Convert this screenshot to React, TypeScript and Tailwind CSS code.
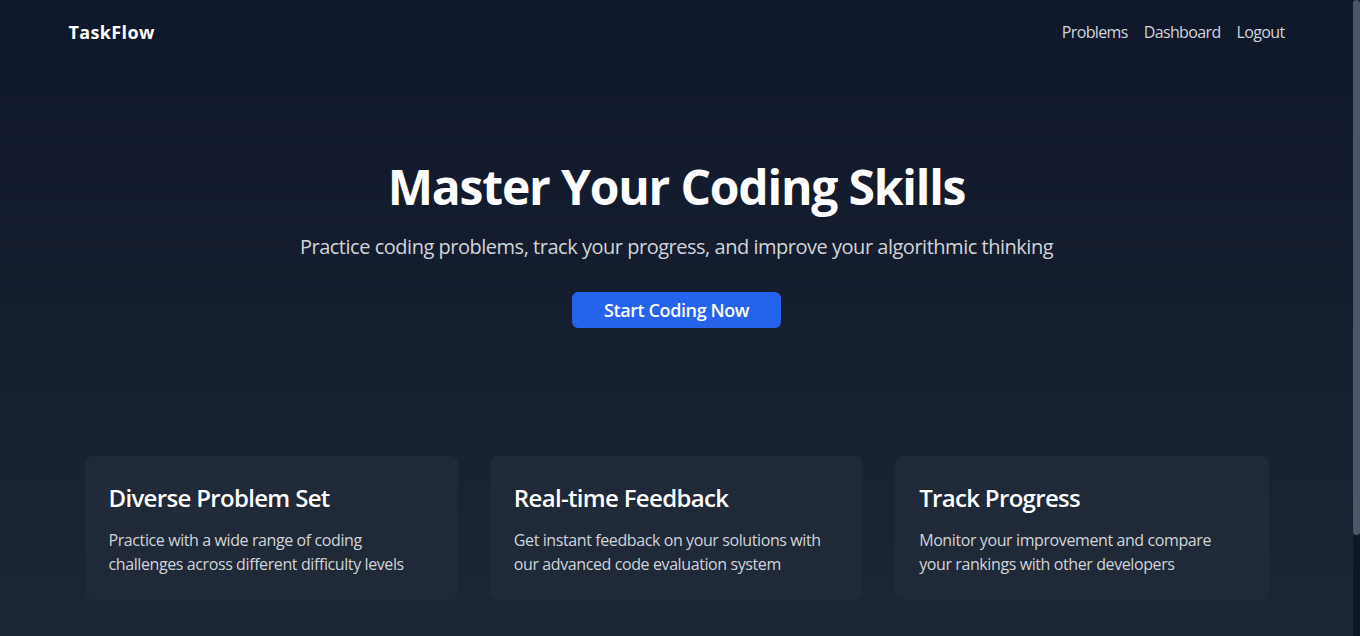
const FEATURES = [
  {
    title: "Diverse Problem Set",
    text: "Practice with a wide range of coding challenges across different difficulty levels",
  },
  {
    title: "Real-time Feedback",
    text: "Get instant feedback on your solutions with our advanced code evaluation system",
  },
  {
    title: "Track Progress",
    text: "Monitor your improvement and compare your rankings with other developers",
  },
];

export default function App() {
  return (
    <div className="flex h-[636px] overflow-hidden bg-[#0f172a] font-['Open_Sans',sans-serif] tracking-tight text-white">
      <main className="min-h-[756px] flex-1 bg-gradient-to-b from-[#0f172a] to-[#1f2937]">
        <nav className="mx-auto flex h-16 max-w-7xl items-center justify-between px-8">
          <span className="text-lg font-bold tracking-[0.02em]">TaskFlow</span>
          <div className="flex gap-4 text-base tracking-[-0.04em] text-[#d1d5db]">
            <a href="#">Problems</a>
            <a href="#">Dashboard</a>
            <a href="#">Logout</a>
          </div>
        </nav>

        <section className="mx-auto max-w-7xl px-8 pt-[99px] text-center">
          <h1 className="mb-[22px] text-5xl leading-[48px] font-bold tracking-[-0.025em]">
            Master Your Coding Skills
          </h1>
          <p className="mb-[31px] text-xl leading-7 tracking-[-0.024em] text-[#d1d5db]">
            Practice coding problems, track your progress, and improve your algorithmic thinking
          </p>
          <div className="flex justify-center">
            <button className="h-9 rounded-md bg-[#2563eb] px-8 text-lg font-semibold text-white">
              Start Coding Now
            </button>
          </div>
        </section>

        <section className="mx-auto mt-32 grid max-w-7xl grid-cols-3 gap-8 px-12">
          {FEATURES.map((f) => (
            <div key={f.title} className="rounded-lg bg-[#1f2937] p-6">
              <h3 className="mb-[14px] pt-0.5 text-2xl leading-8 font-semibold tracking-[-0.028em]">
                {f.title}
              </h3>
              <p className="text-base leading-6 text-[#d1d5db]">{f.text}</p>
            </div>
          ))}
        </section>
      </main>

      {/* scrollbar */}
      <div className="w-[7px] shrink-0 bg-[#0f172a]">
        <div className="h-[535px] rounded-[4px] bg-[#4b5768]" />
      </div>
    </div>
  );
}
